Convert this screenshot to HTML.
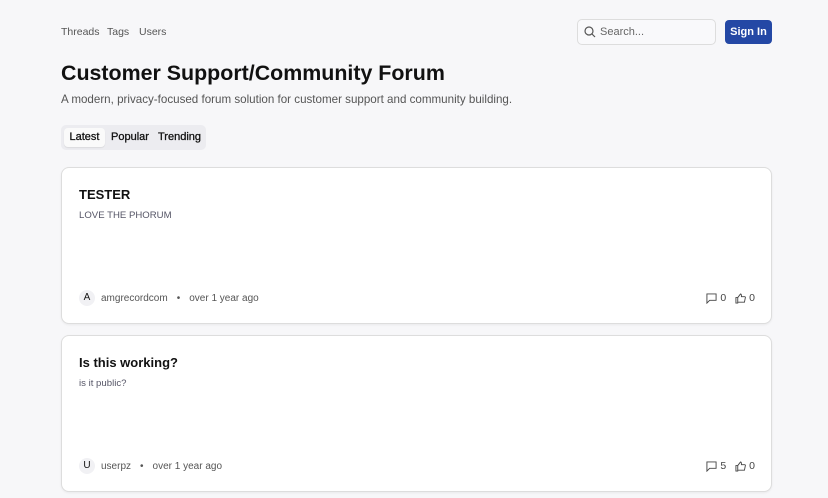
<!DOCTYPE html>
<html><head><style>
*{box-sizing:border-box;margin:0;padding:0}
body{width:828px;height:498px;overflow:hidden;background:#f7f7f9;font-family:"Liberation Sans",sans-serif;color:#111;position:relative}
.a{position:absolute}
.nav{top:26px;left:61px;font-size:10.5px;color:#555}
.nav span{position:absolute;white-space:nowrap}
.search{left:577px;top:19px;width:139px;height:26px;border:1px solid #ddd;border-radius:5px;background:#f9f9fb}
.search span{position:absolute;left:22px;top:6px;font-size:11px;color:#666}
.btn{left:725px;top:20px;width:47px;height:24px;background:#2448a5;border-radius:4px;color:#fff;font-size:11px;font-weight:bold;text-align:center;line-height:24px}
h1{position:absolute;left:61px;top:61px;font-size:21.4px;font-weight:bold;color:#111;white-space:nowrap}
.sub{left:61px;top:93px;font-size:11.6px;color:#555;white-space:nowrap}
.tabs{left:61px;top:125px;width:145px;height:25px;background:#ececf0;border-radius:5px;font-size:11px;color:#111}
.tab{position:absolute;top:3px;height:19px;line-height:19px;white-space:nowrap;-webkit-text-stroke:.3px #111}
.card{left:61px;width:711px;height:157px;background:#fff;border:1px solid #ddd;border-radius:8px;box-shadow:0 1px 2px rgba(0,0,0,.06)}
.card .t{position:absolute;left:17px;top:19px;font-size:13px;font-weight:bold}
.card .b{position:absolute;left:17px;top:42px;font-size:9.6px;color:#556}
.card .m{position:absolute;left:17px;top:122px;font-size:10px;color:#555;display:flex;align-items:center}
.av{width:16px;height:16px;border-radius:50%;background:#f1f1f4;color:#111;text-align:center;line-height:16px;margin-right:6px}
.card .s{position:absolute;right:16px;top:124px;font-size:10.5px;color:#444;display:flex;align-items:center;gap:3px}
</style></head><body>
<div class="a nav"><span style="left:0">Threads</span><span style="left:46px">Tags</span><span style="left:78px">Users</span></div>
<div class="a search"><svg class="a" style="left:6px;top:6px" width="12" height="12" viewBox="0 0 12 12"><circle cx="5" cy="5" r="4" fill="none" stroke="#555" stroke-width="1.2"/><path d="M8 8l3 3" stroke="#555" stroke-width="1.2"/></svg><span>Search...</span></div>
<div class="a btn">Sign In</div>
<h1>Customer Support/Community Forum</h1>
<div class="a sub">A modern, privacy-focused forum solution for customer support and community building.</div>
<div class="a tabs"><div class="tab" style="left:3px;width:41px;background:#fafafa;border-radius:4px;text-align:center;box-shadow:0 1px 1px rgba(0,0,0,.08)">Latest</div><div class="tab" style="left:50px">Popular</div><div class="tab" style="left:97px">Trending</div></div>
<div class="a card" style="top:167px"><div class="t">TESTER</div><div class="b">LOVE THE PHORUM</div><div class="m"><span class="av">A</span>amgrecordcom<span style="margin:0 9px">•</span>over 1 year ago</div>
<div class="s"><svg width="11" height="11" viewBox="0 0 12 12"><path d="M1 1h10v7H4l-3 3z" fill="none" stroke="#444"/></svg>0<svg style="margin-left:6px" width="11" height="11" viewBox="0 0 12 12"><path d="M1 5h2v6H1zM3 5l3-4c1 0 1 1 1 2v1h3.5c.5 0 1 .5.8 1l-1 5H3" fill="none" stroke="#444"/></svg>0</div></div>
<div class="a card" style="top:335px"><div class="t">Is this working?</div><div class="b">is it public?</div><div class="m"><span class="av">U</span>userpz<span style="margin:0 9px">•</span>over 1 year ago</div>
<div class="s"><svg width="11" height="11" viewBox="0 0 12 12"><path d="M1 1h10v7H4l-3 3z" fill="none" stroke="#444"/></svg>5<svg style="margin-left:6px" width="11" height="11" viewBox="0 0 12 12"><path d="M1 5h2v6H1zM3 5l3-4c1 0 1 1 1 2v1h3.5c.5 0 1 .5.8 1l-1 5H3" fill="none" stroke="#444"/></svg>0</div></div>
</body></html>
